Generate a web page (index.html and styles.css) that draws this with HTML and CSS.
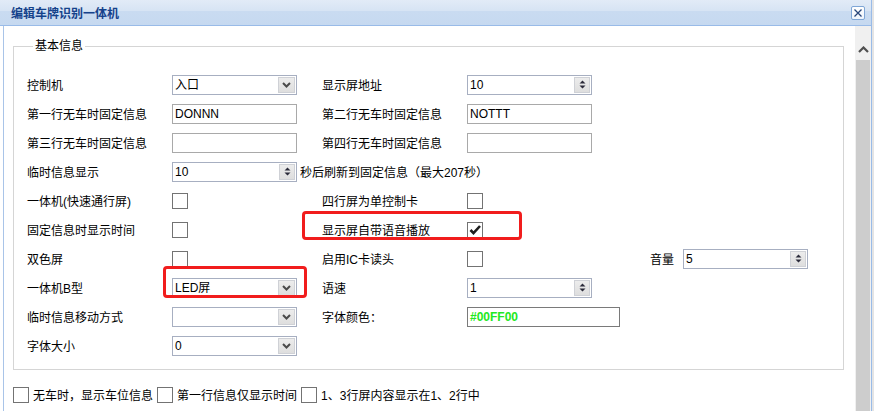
FILE: index.html
```html
<!DOCTYPE html>
<html lang="zh-CN">
<head>
<meta charset="UTF-8">
<title>编辑车牌识别一体机</title>
<link rel="stylesheet" href="styles.css">
</head>
<body>
<div class="win">
    <div class="win-head">
        <span class="win-title">编辑车牌识别一体机</span>
        <a href="javascript:;" class="win-close">
            <svg width="10" height="10" viewBox="0 0 10 10"><path d="M1.5 1.5l7 7M8.5 1.5l-7 7" stroke="#27457a" stroke-width="1.3" fill="none"/></svg>
        </a>
    </div>
    <div class="win-body">
        <div class="main">
            <fieldset class="box">
                <legend>基本信息</legend>
                <div class="row">
                    <span>控制机</span>
                    <div class="combo"><span class="val">入口</span><span class="combo-btn"><svg width="9" height="6" viewBox="0 0 9 6"><path d="M1 1l3.5 3.5L8 1" stroke="#4a4a4a" stroke-width="2" fill="none"/></svg></span></div>
                    <span>显示屏地址</span>
                    <div class="combo"><span class="val">10</span><span class="spin-btn"><svg width="7" height="11" viewBox="0 0 7 11"><path d="M3.5 1.5L6.5 4.5H0.5ZM0.5 6.5H6.5L3.5 9.5Z" fill="#2b2b3a"/></svg></span></div>
                </div>
                <div class="row">
                    <span>第一行无车时固定信息</span>
                    <div class="txt">DONNN</div>
                    <span>第二行无车时固定信息</span>
                    <div class="txt">NOTTT</div>
                </div>
                <div class="row">
                    <span>第三行无车时固定信息</span>
                    <div class="txt"></div>
                    <span>第四行无车时固定信息</span>
                    <div class="txt"></div>
                </div>
                <div class="row">
                    <span>临时信息显示</span>
                    <div class="inline">
                        <div class="combo"><span class="val">10</span><span class="spin-btn"><svg width="7" height="11" viewBox="0 0 7 11"><path d="M3.5 1.5L6.5 4.5H0.5ZM0.5 6.5H6.5L3.5 9.5Z" fill="#2b2b3a"/></svg></span></div>
                        <span>秒后刷新到固定信息（最大207秒）</span>
                    </div>
                </div>
                <div class="row">
                    <span>一体机(快速通行屏)</span>
                    <span class="chk"></span>
                    <span>四行屏为单控制卡</span>
                    <span class="chk"></span>
                </div>
                <div class="row">
                    <span>固定信息时显示时间</span>
                    <span class="chk"></span>
                    <span>显示屏自带语音播放</span>
                    <span class="chk"><svg width="14" height="14" viewBox="0 0 14 14"><path d="M2.5 7l3 3.2L12 3" stroke="#1e1e1e" stroke-width="2.6" fill="none"/></svg></span>
                </div>
                <div class="row">
                    <span>双色屏</span>
                    <span class="chk"></span>
                    <span>启用IC卡读头</span>
                    <span class="chk"></span>
                    <span>音量</span>
                    <div class="combo"><span class="val">5</span><span class="spin-btn"><svg width="7" height="11" viewBox="0 0 7 11"><path d="M3.5 1.5L6.5 4.5H0.5ZM0.5 6.5H6.5L3.5 9.5Z" fill="#2b2b3a"/></svg></span></div>
                </div>
                <div class="row">
                    <span>一体机B型</span>
                    <div class="combo"><span class="val">LED屏</span><span class="combo-btn"><svg width="9" height="6" viewBox="0 0 9 6"><path d="M1 1l3.5 3.5L8 1" stroke="#4a4a4a" stroke-width="2" fill="none"/></svg></span></div>
                    <span>语速</span>
                    <div class="combo"><span class="val">1</span><span class="spin-btn"><svg width="7" height="11" viewBox="0 0 7 11"><path d="M3.5 1.5L6.5 4.5H0.5ZM0.5 6.5H6.5L3.5 9.5Z" fill="#2b2b3a"/></svg></span></div>
                </div>
                <div class="row">
                    <span>临时信息移动方式</span>
                    <div class="combo"><span class="val"></span><span class="combo-btn"><svg width="9" height="6" viewBox="0 0 9 6"><path d="M1 1l3.5 3.5L8 1" stroke="#4a4a4a" stroke-width="2" fill="none"/></svg></span></div>
                    <span>字体颜色：</span>
                    <div class="txt color">#00FF00</div>
                </div>
                <div class="row">
                    <span>字体大小</span>
                    <div class="combo"><span class="val">0</span><span class="combo-btn"><svg width="9" height="6" viewBox="0 0 9 6"><path d="M1 1l3.5 3.5L8 1" stroke="#4a4a4a" stroke-width="2" fill="none"/></svg></span></div>
                </div>
            </fieldset>
            <div class="opts">
                <span class="chk"></span><span>无车时，显示车位信息</span>
                <span class="chk"></span><span>第一行信息仅显示时间</span>
                <span class="chk"></span><span>1、3行屏内容显示在1、2行中</span>
            </div>
            <div class="more">无车时的车位信息</div>
        </div>
        <div class="scroll">
            <div class="scroll-up"><svg width="11" height="7" viewBox="0 0 11 7"><path d="M1 6l4.5-4.5L10 6" stroke="#505050" stroke-width="2.2" fill="none"/></svg></div>
            <div class="scroll-thumb"></div>
        </div>
    </div>
    <!-- 标注框 -->
    <div class="mark mark-voice"></div>
    <div class="mark mark-type"></div>
</div>
</body>
</html>
```

FILE: styles.css
```css
* {
    box-sizing: border-box;
}
body {
    margin: 0;
    height: 411px;
    overflow: hidden;
    background: #e4e4e4;
    font: 12px "Liberation Sans", "Noto Sans CJK SC", sans-serif;
    color: #000;
}
.win {
    position: relative;
    width: 872px;
    height: 411px;
    background: #fff;
    border-right: 1px solid #99bbe8;
}
.win-head {
    display: flex;
    align-items: center;
    justify-content: space-between;
    height: 26px;
    padding: 0 6px 0 11px;
    border-bottom: 1px solid #99bbe8;
    background: linear-gradient(#e2ebf7 0, #d7e4f4 42%, #c9dbf1 46%, #c6d9f0 100%);
}
.win-title {
    font-weight: bold;
    color: #15428b;
    font-size: 12px;
}
.win-close {
    display: flex;
    align-items: center;
    justify-content: center;
    width: 14px;
    height: 14px;
    border: 1px solid #7fa6d6;
    border-radius: 2px;
    background: linear-gradient(#fff, #eef4fc);
}
.win-body {
    display: flex;
    height: 385px;
    margin-left: 3px;
    border-left: 1px solid #a9c4e8;
}
.main {
    width: 851px;
    padding: 12px 0 0 9px;
}
.box {
    width: 831px;
    margin: 0;
    padding: 16px 13px 9px;
    border: 1px solid #d5d5d5;
    min-inline-size: 0;
}
.box legend {
    margin-left: 6px;
    padding: 0 2px;
    line-height: 16px;
}
.row {
    display: grid;
    grid-template-columns: 145px 150px 145px 183px 33px 125px;
    align-items: center;
    height: 29px;
}
.inline {
    grid-column: 2 / -1;
    display: flex;
    align-items: center;
    gap: 3px;
}
.combo {
    display: flex;
    width: 125px;
    height: 20px;
    border: 1px solid #a7afc1;
    background: #fff;
}
.val {
    flex: 1;
    padding-left: 2px;
    line-height: 18px;
}
.combo-btn,
.spin-btn {
    display: flex;
    align-items: center;
    justify-content: center;
    width: 17px;
    margin: 1px;
    background: linear-gradient(#ececec, #dedede);
    border: 1px solid #cfd1d6;
}
.spin-btn {
    width: 16px;
}
.txt {
    width: 125px;
    height: 20px;
    padding-left: 2px;
    line-height: 18px;
    border: 1px solid #a9a9a9;
}
.txt.color {
    width: 153px;
    border-color: #7a7a7a;
    color: #22e822;
    font-weight: bold;
}
.chk {
    display: flex;
    align-items: center;
    justify-content: center;
    width: 16px;
    height: 16px;
    border: 1px solid #737373;
    background: #fff;
}
.opts {
    display: flex;
    align-items: center;
    gap: 4px;
    margin-top: 16px;
}
.more {
    margin-top: 5px;
    padding-left: 22px;
}
.scroll {
    display: flex;
    flex-direction: column;
    width: 16px;
    background: #f0f0f0;
}
.scroll-up {
    display: flex;
    align-items: flex-end;
    justify-content: center;
    height: 34px;
    padding-bottom: 7px;
}
.scroll-thumb {
    flex: 1;
    margin: 0 1px;
    background: #cdcdcd;
}
.mark {
    position: absolute;
    border: 3px solid #f11d1d;
    border-radius: 4px;
}
.mark-voice {
    left: 302px;
    top: 211px;
    width: 220px;
    height: 29px;
}
.mark-type {
    left: 163px;
    top: 266px;
    width: 144px;
    height: 32px;
}
```
